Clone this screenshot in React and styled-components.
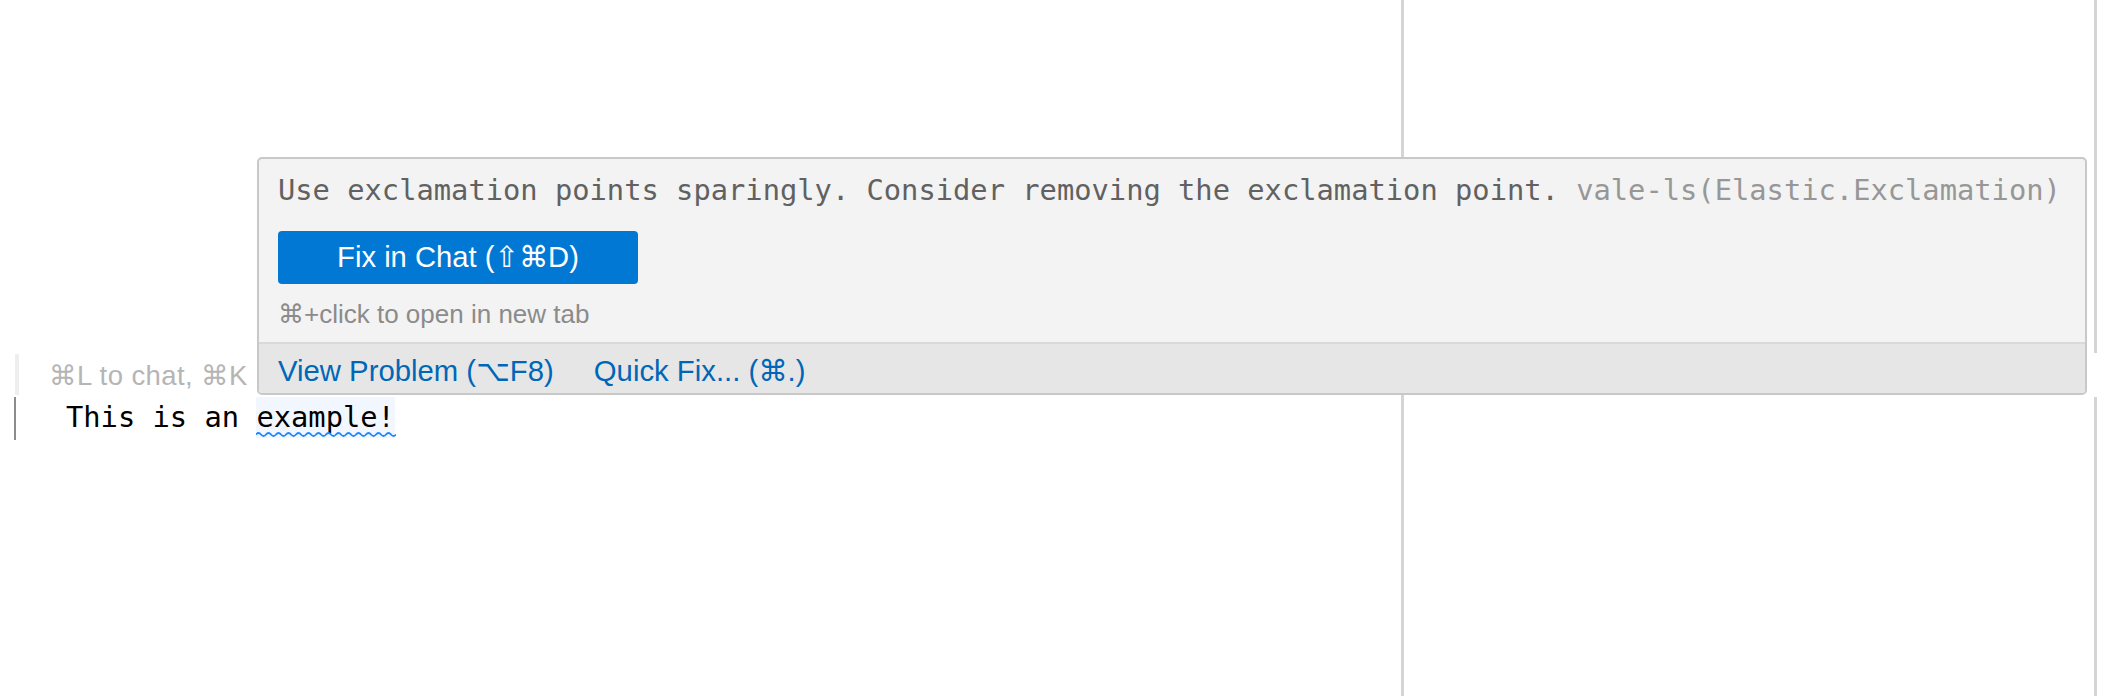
import React from 'react'
import styled, { createGlobalStyle } from 'styled-components'

const GlobalStyle = createGlobalStyle`
    html, body {
        margin: 0;
        padding: 0;
        background: #ffffff;
    }
    * {
        box-sizing: border-box;
    }
`;

const sans = `"Liberation Sans", "DejaVu Sans", sans-serif`;
const mono = `"DejaVu Sans Mono", "Liberation Mono", monospace`;

const Editor = styled.div`
    position: relative;
    width: 2122px;
    height: 696px;
    overflow: hidden;
    padding-top: 354px;
    background: #ffffff;
`;

const Ruler = styled.div`
    position: absolute;
    left: ${p => p.x}px;
    top: ${p => p.top}px;
    height: ${p => p.h}px;
    width: 3px;
    background: #d5d5d5;
`;

const PlaceholderLine = styled.div`
    margin-left: 15px;
    width: 242px;
    height: 41px;
    border-left: 4px solid #eeeeee;
    padding-left: 30px;
    font-family: ${sans};
    font-size: 27.5px;
    letter-spacing: 0.4px;
    line-height: 44px;
    color: #b5b5b5;
    white-space: nowrap;
`;

const CodeLine = styled.div`
    margin-top: 2px;
    margin-left: 14px;
    height: 43px;
    border-left: 2px solid #8c8c8c;
    padding-left: 50px;
    font-family: ${mono};
    font-size: 28.75px;
    line-height: 41px;
    color: #000000;
    white-space: pre;
`;

const Flagged = styled.span`
    position: relative;
    display: inline-block;
    height: 41px;
    background: #f2f7ff;
`;

const Squiggle = styled.svg`
    position: absolute;
    left: 0;
    top: 34px;
`;

const HoverWidget = styled.div`
    position: absolute;
    top: 157px;
    left: 257px;
    width: 1830px;
    border: 2px solid #c8c8c8;
    border-radius: 5px;
    background: #f3f3f3;
    overflow: hidden;
    z-index: 10;
`;

const WidgetBody = styled.div`
    display: flex;
    flex-direction: column;
    align-items: flex-start;
    padding: 11px 19px 13px;
`;

const Message = styled.div`
    font-family: ${mono};
    font-size: 28.75px;
    line-height: 40px;
    color: #616161;
    white-space: nowrap;
`;

const Source = styled.span`
    color: #979797;
`;

const ChatButton = styled.button`
    margin-top: 21px;
    width: 360px;
    height: 53px;
    border: none;
    border-radius: 4px;
    background: #0078d4;
    color: #ffffff;
    font-family: ${sans};
    font-size: 29.2px;
    line-height: 53px;
    padding: 0;
    text-align: center;
    cursor: pointer;
`;

const Hint = styled.div`
    margin-top: 15px;
    font-family: ${sans};
    font-size: 26px;
    line-height: 30px;
    color: #8b8b8b;
`;

const WidgetFooter = styled.div`
    display: flex;
    gap: 40px;
    padding: 10px 19px 5px;
    border-top: 2px solid #d9d9d9;
    background: #e6e6e6;
`;

const FooterLink = styled.a`
    font-family: ${sans};
    font-size: 29.3px;
    line-height: 34px;
    color: #0067b8;
    text-decoration: none;
    cursor: pointer;
`;

function wavePath(width, period) {
    let d = `M0 3.5`;
    for (let x = 0; x < width; x += period) {
        d += ` q${period / 4} -3 ${period / 2} 0 q${period / 4} 3 ${period / 2} 0`;
    }
    return d;
}

export default function App() {
    return (
        <>
            <GlobalStyle />
            <Editor>
                <Ruler x={1401} top={0} h={696} />
                <Ruler x={2094} top={0} h={353} />
                <Ruler x={2094} top={397} h={299} />

                {/* the rest of the hint sits under the hover widget */}
                <PlaceholderLine>⌘L to chat, ⌘K</PlaceholderLine>
                <CodeLine>
                    {'This is an '}
                    <Flagged>
                        example!
                        <Squiggle width="140" height="7" viewBox="0 0 140 7">
                            <path d={wavePath(140, 10)} fill="none" stroke="#1a86ff" strokeWidth="1.8" />
                        </Squiggle>
                    </Flagged>
                </CodeLine>

                <HoverWidget>
                    <WidgetBody>
                        <Message>
                            Use exclamation points sparingly. Consider removing the exclamation point.{' '}
                            <Source>vale-ls(Elastic.Exclamation)</Source>
                        </Message>
                        <ChatButton>Fix in Chat (⇧⌘D)</ChatButton>
                        <Hint>⌘+click to open in new tab</Hint>
                    </WidgetBody>
                    <WidgetFooter>
                        <FooterLink>View Problem (⌥F8)</FooterLink>
                        <FooterLink>Quick Fix... (⌘.)</FooterLink>
                    </WidgetFooter>
                </HoverWidget>
            </Editor>
        </>
    )
}
